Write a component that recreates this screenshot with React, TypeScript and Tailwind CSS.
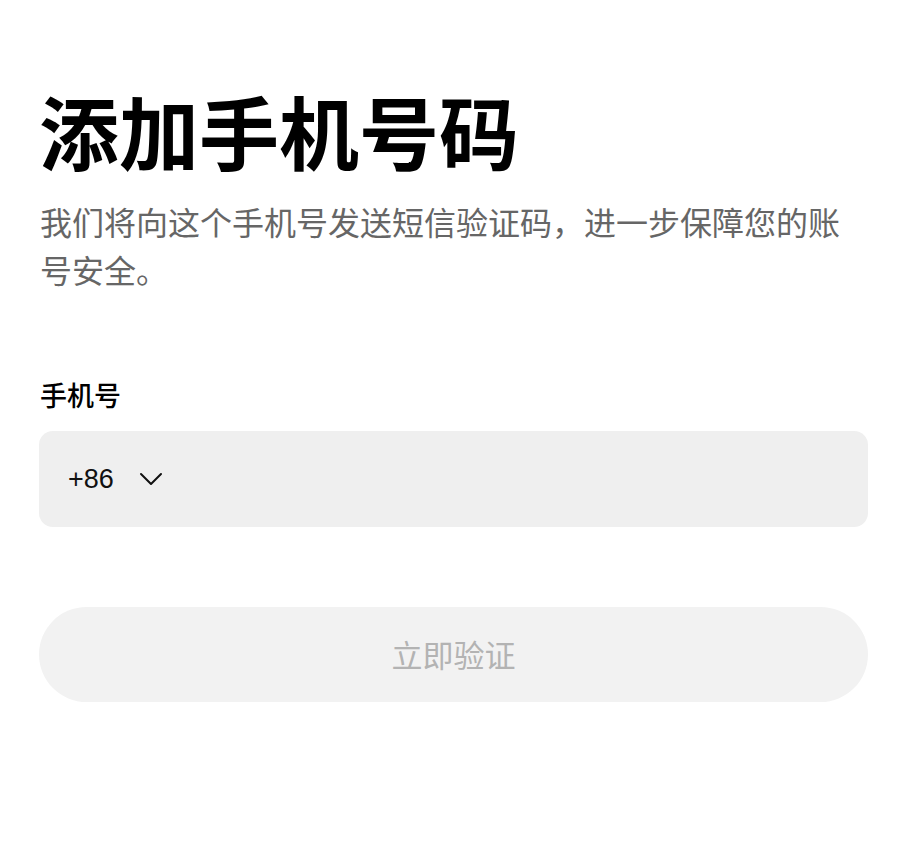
const font = { fontFamily: '"Noto Sans CJK SC", "Noto Sans", sans-serif' };

export default function App() {
  return (
    <div className="min-h-[866px] w-full bg-white" style={font}>
      <div className="w-[908px] pl-[39px] pr-[40px] pt-[81px]">
        <h1 className="text-[80px] leading-[96px] font-bold text-black">
          添加手机号码
        </h1>
        <p className="mt-[20px] text-[32px] leading-[48px] text-[#666666] pl-[1px]">
          我们将向这个手机号发送短信验证码，进一步保障您的账号安全。
        </p>

        <label className="mt-[84px] block pl-[1px] text-[27px] leading-[36px] font-medium text-black">
          手机号
        </label>
        <div className="mt-[18px] flex h-[96px] items-center rounded-[14px] bg-[#efefef] pl-[29px]">
          <span
            className="text-[27px] text-[#111111]"
            style={{ fontFamily: '"Liberation Sans", "Noto Sans", sans-serif' }}
          >
            +86
          </span>
          <svg
            className="ml-[25px] h-[14px] w-[24px]"
            viewBox="0 0 24 14"
            fill="none"
            stroke="#111111"
            strokeWidth="2"
            strokeLinecap="round"
            strokeLinejoin="round"
          >
            <path d="M2 2 L12 12 L22 2" />
          </svg>
        </div>

        <button className="mt-[80px] flex h-[95px] w-full items-center justify-center rounded-full bg-[#f2f2f2] text-[31px] text-[#b3b3b3]">
          立即验证
        </button>
      </div>
    </div>
  );
}
